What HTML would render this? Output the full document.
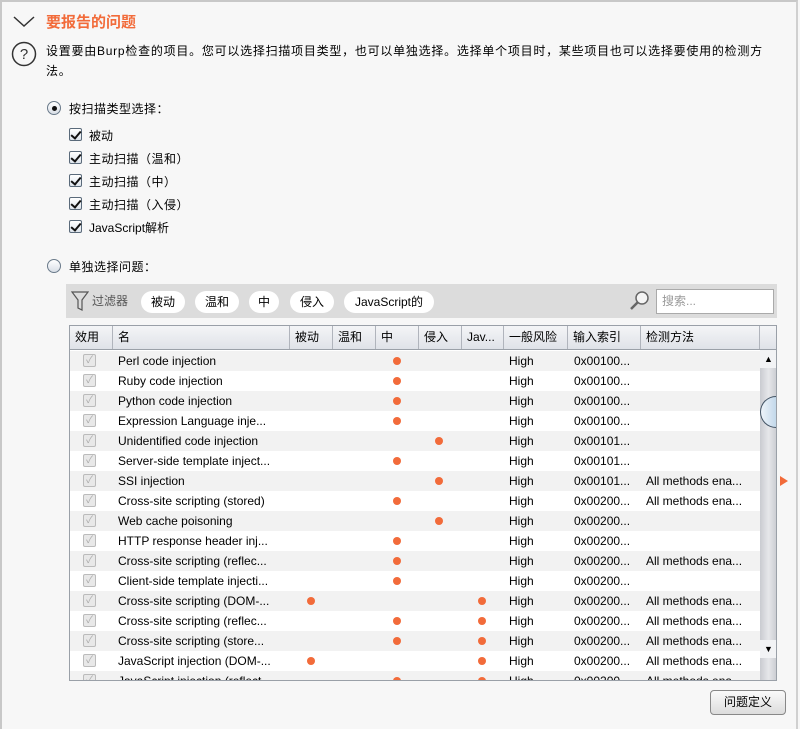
<!DOCTYPE html>
<html><head><meta charset="utf-8"><style>
*{margin:0;padding:0;box-sizing:border-box}
body{width:800px;height:729px;background:#f7f7f7;font-family:"Liberation Sans","Noto Sans CJK SC",sans-serif;font-size:12px;color:#000;position:relative;overflow:hidden}
.frame{position:absolute;left:0;top:0;width:798px;height:729px;border:2px solid #c8c8c8;border-right:2px solid #d0d0d0;border-bottom:none}
.a{position:absolute;white-space:nowrap}
.cb{position:absolute;width:13px;height:13px;border:1px solid #5a6a7a;background:linear-gradient(#fff,#dde4ec);border-radius:2px}
.cb:after{content:"";position:absolute;left:3px;top:0px;width:4px;height:8px;border:solid #111;border-width:0 2px 2px 0;transform:rotate(40deg)}
.rb{position:absolute;width:14px;height:14px;border:1px solid #6a7a8a;border-radius:50%;background:linear-gradient(#fff,#d8dee6)}
.pill{position:absolute;top:291px;height:22px;background:#fff;border-radius:11px;line-height:22px;text-align:center;font-size:12px}
.tbl{position:absolute;left:69px;top:325px;width:708px;height:356px;border:1px solid #9aa0a8;background:#fff;overflow:hidden}
.hd{position:absolute;left:0;top:0;width:706px;height:24px;background:linear-gradient(#f4f5f7,#dfe2e8);border-bottom:1px solid #9aa0a8}
.hc{position:absolute;top:0;height:23px;line-height:23px;padding-left:5px;border-right:1px solid #b0b4bc;font-size:12px}
.row{position:absolute;left:0;width:690px;height:20px;line-height:20px;font-size:12px}
.row span{position:absolute}
.dot{position:absolute;width:8px;height:8px;border-radius:50%;background:#f26b3a;top:6px}
.gc{position:absolute;left:13px;top:3px;width:13px;height:13px;border:1px solid #bbb;border-radius:2px;background:#e8e8e8;color:#aaa;font-size:10px;line-height:12px;text-align:center}
</style></head><body>
<div class="frame"></div>
<svg class="a" style="left:12px;top:14px" width="24" height="14"><path d="M2 3 L12 12 L22 3" stroke="#333" stroke-width="1.5" fill="none"/></svg>
<div class="a" style="left:46px;top:11px;font-size:15px;color:#f26b3a;font-weight:bold">要报告的问题</div>
<svg class="a" style="left:11px;top:41px" width="26" height="26"><circle cx="13" cy="13" r="11.5" stroke="#333" stroke-width="1.5" fill="none"/><text x="13" y="18" font-size="15" text-anchor="middle" fill="#333" font-family="Liberation Sans">?</text></svg>
<div class="a" style="left:46px;top:41px;line-height:20px;letter-spacing:0.75px">设置要由Burp检查的项目。您可以选择扫描项目类型，也可以单独选择。选择单个项目时，某些项目也可以选择要使用的检测方<br>法。</div>
<div class="rb" style="left:47px;top:101px"><div style="position:absolute;left:4px;top:4px;width:5px;height:5px;border-radius:50%;background:#111"></div></div>
<div class="a" style="left:69px;top:100px;letter-spacing:0.5px">按扫描类型选择：</div>
<div class="cb" style="left:69px;top:128px"></div><div class="a" style="left:89px;top:127px">被动</div>
<div class="cb" style="left:69px;top:151px"></div><div class="a" style="left:89px;top:150px;letter-spacing:0.5px">主动扫描（温和）</div>
<div class="cb" style="left:69px;top:174px"></div><div class="a" style="left:89px;top:173px;letter-spacing:0.5px">主动扫描（中）</div>
<div class="cb" style="left:69px;top:197px"></div><div class="a" style="left:89px;top:196px;letter-spacing:0.5px">主动扫描（入侵）</div>
<div class="cb" style="left:69px;top:220px"></div><div class="a" style="left:89px;top:219px">JavaScript解析</div>
<div class="rb" style="left:47px;top:259px"></div>
<div class="a" style="left:69px;top:258px;letter-spacing:0.5px">单独选择问题：</div>
<div class="a" style="left:66px;top:284px;width:711px;height:34px;background:#dcdcdc"></div>
<svg class="a" style="left:71px;top:291px" width="18" height="21"><path d="M1 1 H17 L11 9 V19 L7 17 V9 Z" stroke="#555" stroke-width="1.2" fill="none"/></svg>
<div class="a" style="left:92px;top:292px;color:#555">过滤器</div>
<div class="pill" style="left:141px;width:44px">被动</div>
<div class="pill" style="left:195px;width:44px">温和</div>
<div class="pill" style="left:249px;width:30px">中</div>
<div class="pill" style="left:290px;width:44px">侵入</div>
<div class="pill" style="left:344px;width:90px">JavaScript的</div>
<svg class="a" style="left:629px;top:290px" width="22" height="22"><circle cx="13" cy="8" r="6" stroke="#666" stroke-width="1.5" fill="#f4f4f4"/><path d="M9 12 L2 19" stroke="#666" stroke-width="2.5"/></svg>
<div class="a" style="left:656px;top:289px;width:118px;height:25px;background:#fff;border:1px solid #aaa;color:#999;padding-left:5px;line-height:23px">搜索...</div>
<div class="tbl">
<div class="hd">
<div class="hc" style="left:0;width:43px">效用</div>
<div class="hc" style="left:43px;width:177px">名</div>
<div class="hc" style="left:220px;width:43px">被动</div>
<div class="hc" style="left:263px;width:43px">温和</div>
<div class="hc" style="left:306px;width:43px">中</div>
<div class="hc" style="left:349px;width:43px">侵入</div>
<div class="hc" style="left:392px;width:42px">Jav...</div>
<div class="hc" style="left:434px;width:64px">一般风险</div>
<div class="hc" style="left:498px;width:73px">输入索引</div>
<div class="hc" style="left:571px;width:119px">检测方法</div>
</div>
<div id="rows"></div>
<div style="position:absolute;left:690px;top:24px;width:17px;height:332px;background:linear-gradient(90deg,#c9cbd0,#e6e7ea,#c9cbd0)"></div>
<div style="position:absolute;left:690px;top:24px;width:17px;height:18px;background:#f2f3f5;text-align:center;font-size:9px;line-height:18px">▲</div>
<div style="position:absolute;left:690px;top:314px;width:17px;height:18px;background:#f2f3f5;text-align:center;font-size:9px;line-height:18px">▼</div>
<div style="position:absolute;left:690px;top:70px;width:16px;height:32px;border:1px solid #456;border-right:none;border-radius:16px 0 0 16px;background:linear-gradient(90deg,#eef4fa,#c3d8ea)"></div>
</div>
<div class="a" style="left:780px;top:476px;width:0;height:0;border-left:8px solid #f26b3a;border-top:5px solid transparent;border-bottom:5px solid transparent"></div>
<div class="a" style="left:710px;top:690px;width:76px;height:25px;border:1px solid #888;border-radius:4px;background:linear-gradient(#fafafa,#dcdcdc);text-align:center;line-height:23px">问题定义</div>
<script>
var R=[["Perl code injection",[4],"0x00100...",0],["Ruby code injection",[4],"0x00100...",0],["Python code injection",[4],"0x00100...",0],["Expression Language inje...",[4],"0x00100...",0],["Unidentified code injection",[5],"0x00101...",0],["Server-side template inject...",[4],"0x00101...",0],["SSI injection",[5],"0x00101...",1],["Cross-site scripting (stored)",[4],"0x00200...",1],["Web cache poisoning",[5],"0x00200...",0],["HTTP response header inj...",[4],"0x00200...",0],["Cross-site scripting (reflec...",[4],"0x00200...",1],["Client-side template injecti...",[4],"0x00200...",0],["Cross-site scripting (DOM-...",[2,6],"0x00200...",1],["Cross-site scripting (reflec...",[4,6],"0x00200...",1],["Cross-site scripting (store...",[4,6],"0x00200...",1],["JavaScript injection (DOM-...",[2,6],"0x00200...",1],["JavaScript injection (reflect...",[4,6],"0x00200...",1]];
var X={2:237,4:323,5:365,6:408},h="";
R.forEach(function(r,i){h+='<div class="row" style="top:'+(25+i*20)+'px;background:'+(i%2?'#fff':'#f2f2f2')+'"><div class="gc">✓</div><span style="left:48px">'+r[0]+'</span>';r[1].forEach(function(c){h+='<div class="dot" style="left:'+X[c]+'px"></div>'});h+='<span style="left:439px">High</span><span style="left:504px">'+r[2]+'</span>'+(r[3]?'<span style="left:576px">All methods ena...</span>':'')+'</div>'});
document.getElementById("rows").innerHTML=h;
</script>
</body></html>
